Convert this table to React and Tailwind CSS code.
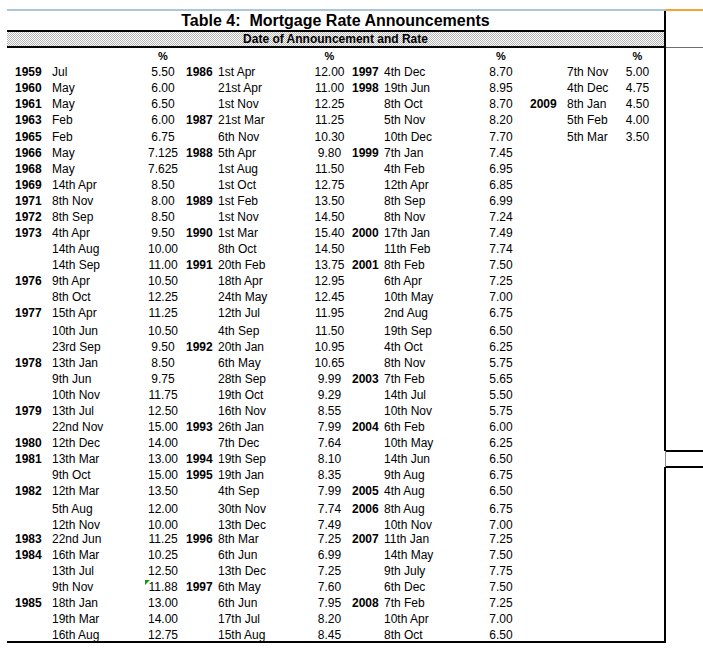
import React from "react";

// [row height, year, date, rate] x 4 column groups
const rows = [
  [16, "1959", "Jul", "5.50", "1986", "1st Apr", "12.00", "1997", "4th Dec", "8.70", "", "7th Nov", "5.00"],
  [16, "1960", "May", "6.00", "", "21st Apr", "11.00", "1998", "19th Jun", "8.95", "", "4th Dec", "4.75"],
  [16, "1961", "May", "6.50", "", "1st Nov", "12.25", "", "8th Oct", "8.70", "2009", "8th Jan", "4.50"],
  [16, "1963", "Feb", "6.00", "1987", "21st Mar", "11.25", "", "5th Nov", "8.20", "", "5th Feb", "4.00"],
  [17, "1965", "Feb", "6.75", "", "6th Nov", "10.30", "", "10th Dec", "7.70", "", "5th Mar", "3.50"],
  [16, "1966", "May", "7.125", "1988", "5th Apr", "9.80", "1999", "7th Jan", "7.45", "", "", ""],
  [16, "1968", "May", "7.625", "", "1st Aug", "11.50", "", "4th Feb", "6.95", "", "", ""],
  [16, "1969", "14th Apr", "8.50", "", "1st Oct", "12.75", "", "12th Apr", "6.85", "", "", ""],
  [16, "1971", "8th Nov", "8.00", "1989", "1st Feb", "13.50", "", "8th Sep", "6.99", "", "", ""],
  [16, "1972", "8th Sep", "8.50", "", "1st Nov", "14.50", "", "8th Nov", "7.24", "", "", ""],
  [16, "1973", "4th Apr", "9.50", "1990", "1st Mar", "15.40", "2000", "17th Jan", "7.49", "", "", ""],
  [16, "", "14th Aug", "10.00", "", "8th Oct", "14.50", "", "11th Feb", "7.74", "", "", ""],
  [16, "", "14th Sep", "11.00", "1991", "20th Feb", "13.75", "2001", "8th Feb", "7.50", "", "", ""],
  [16, "1976", "9th Apr", "10.50", "", "18th Apr", "12.95", "", "6th Apr", "7.25", "", "", ""],
  [16, "", "8th Oct", "12.25", "", "24th May", "12.45", "", "10th May", "7.00", "", "", ""],
  [16, "1977", "15th Apr", "11.25", "", "12th Jul", "11.95", "", "2nd Aug", "6.75", "", "", ""],
  [18, "", "10th Jun", "10.50", "", "4th Sep", "11.50", "", "19th Sep", "6.50", "", "", ""],
  [16, "", "23rd Sep", "9.50", "1992", "20th Jan", "10.95", "", "4th Oct", "6.25", "", "", ""],
  [16, "1978", "13th Jan", "8.50", "", "6th May", "10.65", "", "8th Nov", "5.75", "", "", ""],
  [16, "", "9th Jun", "9.75", "", "28th Sep", "9.99", "2003", "7th Feb", "5.65", "", "", ""],
  [16, "", "10th Nov", "11.75", "", "19th Oct", "9.29", "", "14th Jul", "5.50", "", "", ""],
  [16, "1979", "13th Jul", "12.50", "", "16th Nov", "8.55", "", "10th Nov", "5.75", "", "", ""],
  [16, "", "22nd Nov", "15.00", "1993", "26th Jan", "7.99", "2004", "6th Feb", "6.00", "", "", ""],
  [16, "1980", "12th Dec", "14.00", "", "7th Dec", "7.64", "", "10th May", "6.25", "", "", ""],
  [16, "1981", "13th Mar", "13.00", "1994", "19th Sep", "8.10", "", "14th Jun", "6.50", "", "", ""],
  [16, "", "9th Oct", "15.00", "1995", "19th Jan", "8.35", "", "9th Aug", "6.75", "", "", ""],
  [16, "1982", "12th Mar", "13.50", "", "4th Sep", "7.99", "2005", "4th Aug", "6.50", "", "", ""],
  [18, "", "5th Aug", "12.00", "", "30th Nov", "7.74", "2006", "8th Aug", "6.75", "", "", ""],
  [14, "", "12th Nov", "10.00", "", "13th Dec", "7.49", "", "10th Nov", "7.00", "", "", ""],
  [16, "1983", "22nd Jun", "11.25", "1996", "8th Mar", "7.25", "2007", "11th Jan", "7.25", "", "", ""],
  [16, "1984", "16th Mar", "10.25", "", "6th Jun", "6.99", "", "14th May", "7.50", "", "", ""],
  [16, "", "13th Jul", "12.50", "", "13th Dec", "7.25", "", "9th July", "7.75", "", "", ""],
  [16, "", "9th Nov", "11.88", "1997", "6th May", "7.60", "", "6th Dec", "7.50", "", "", ""],
  [16, "1985", "18th Jan", "13.00", "", "6th Jun", "7.95", "2008", "7th Feb", "7.25", "", "", ""],
  [16, "", "19th Mar", "14.00", "", "17th Jul", "8.20", "", "10th Apr", "7.00", "", "", ""],
  [14, "", "16th Aug", "12.75", "", "15th Aug", "8.45", "", "8th Oct", "6.50", "", "", ""],
];

const cols = "grid grid-cols-[45px_92px_38px_36px_93px_37px_36px_93px_48px_42px_44px_53px]";

const Cell = ({ kind, children }) => {
  if (kind === "rate")
    return <div className="flex items-end justify-center whitespace-nowrap">{children}</div>;
  return <div className="flex items-end whitespace-nowrap">{children}</div>;
};

const App = () => {
  return (
    <div className="w-[703px] h-[665px] bg-white text-black font-['Liberation_Sans',Arial,sans-serif] overflow-hidden">
      {/* sheet top edge */}
      <div className="flex h-[2px] mt-[9px]">
        <div className="w-[7px]"></div>
        <div className="w-[658px] bg-[#aec4df]"></div>
        <div className="flex-1 bg-[#f5a236]"></div>
      </div>

      <div className="flex">
        <div className="w-[7px]"></div>

        {/* TABLE */}
        <div className="w-[659px] border-b-2 border-black">
          <div className="h-[19px] border-r-2 border-black flex items-center justify-center text-[16px] font-bold leading-[19px] whitespace-nowrap">
            Table 4:&nbsp; Mortgage Rate Announcements
          </div>
          <div className="h-[14px] border-y-2 border-r-2 border-black box-content bg-[repeating-conic-gradient(#b4b4b4_0_25%,#ffffff_0_50%)] bg-[length:2px_2px] flex items-center justify-center text-[12px] font-bold leading-[14px]">
            Date of Announcement and Rate
          </div>

          <div className={`${cols} h-[16px] border-r-2 border-black text-[11px] font-bold leading-[16px]`}>
            <div></div><div></div><Cell kind="rate">%</Cell>
            <div></div><div></div><Cell kind="rate">%</Cell>
            <div></div><div></div><Cell kind="rate">%</Cell>
            <div></div><div></div><Cell kind="rate">%</Cell>
          </div>

          {rows.map((r, i) => {
            const [h, ...c] = r;
            const edge = i === 24 ? "border-r border-[#8a8a8a]" : "border-r-2 border-black";
            return (
              <div
                key={i}
                className={`${cols} ${edge} text-[12px] leading-[16px]`}
                style={{ height: h }}
              >
                <div className="flex items-end pl-[8px] font-bold">{c[0]}</div>
                <Cell>{c[1]}</Cell>
                <div className="relative flex items-end justify-center whitespace-nowrap">
                  {i === 32 && (
                    <span className="absolute top-[1px] left-[1px] w-0 h-0 border-t-[5px] border-r-[5px] border-t-[#119a11] border-r-transparent"></span>
                  )}
                  {c[2]}
                </div>
                <div className="flex items-end pl-[4px] font-bold">{c[3]}</div>
                <Cell>{c[4]}</Cell>
                <Cell kind="rate">{c[5]}</Cell>
                <div className="flex items-end pl-[4px] font-bold">{c[6]}</div>
                <Cell>{c[7]}</Cell>
                <Cell kind="rate">{c[8]}</Cell>
                <div className="flex items-end pl-[5px] font-bold">{c[9]}</div>
                <Cell>{c[10]}</Cell>
                <Cell kind="rate">{c[11]}</Cell>
              </div>
            );
          })}
        </div>

        {/* outside cells to the right */}
        <div className="w-[37px]">
          <div className="h-[36px]"></div>
          <div className="h-px bg-[#6f6f6f]"></div>
          <div className="h-[402px]"></div>
          <div className="h-[18px] border-y-2 border-black"></div>
        </div>
      </div>
    </div>
  );
};

export default App;
